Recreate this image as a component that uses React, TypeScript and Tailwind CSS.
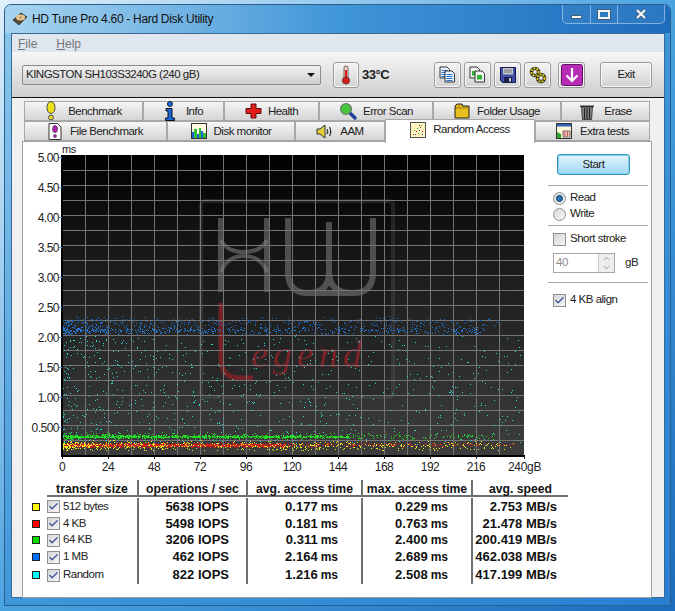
import type { ReactNode } from "react";
import { Check, ChevronDown, ChevronUp } from "lucide-react";

function makeRandom(seed: number) {
  let s = seed;
  return () => {
    s = (s + 0x6d2b79f5) | 0;
    let t = Math.imul(s ^ (s >>> 15), 1 | s);
    t = (t + Math.imul(t ^ (t >>> 7), 61 | t)) ^ t;
    return ((t ^ (t >>> 14)) >>> 0) / 4294967296;
  };
}

const rnd = makeRandom(42);
const PLOT_L = 62;
const PLOT_W = 460;

// x is squeezed to the left so points thin out towards 240 gB
function dots(count: number, power: number, top: number, bottom: number, maxX = 1) {
  let d = "";
  for (let i = 0; i < count; i++) {
    const x = Math.round(PLOT_L + Math.pow(rnd(), power) * PLOT_W * maxX);
    const y = Math.round(top + (rnd() + rnd()) * 0.5 * (bottom - top));
    d += `M${x} ${y}h1v1h-1z`;
  }
  return d;
}

function flatDots(count: number, power: number, top: number, bottom: number) {
  let d = "";
  for (let i = 0; i < count; i++) {
    const x = Math.round(PLOT_L + Math.pow(rnd(), power) * PLOT_W);
    const y = Math.round(top + rnd() * (bottom - top));
    d += `M${x} ${y}h1v1h-1z`;
  }
  return d;
}

const series = {
  random: flatDots(800, 1.5, 336, 446),
  blueHigh: dots(420, 1.45, 316, 328, 0.95),
  blueLow: dots(620, 1.5, 325, 335, 0.92),
  greenSolid: dots(900, 1.2, 435, 438, 0.62),
  green: dots(420, 1.45, 432, 440, 0.95),
  redSolid: dots(1500, 1, 443, 447, 0.48),
  red: dots(380, 1.5, 442, 447, 0.98),
  yellow: dots(640, 1.7, 440, 451, 0.98),
};

const yLabels = ["5.00", "4.50", "4.00", "3.50", "3.00", "2.50", "2.00", "1.50", "1.00", "0.500"];
const xLabels = ["0", "24", "48", "72", "96", "120", "144", "168", "192", "216"];

function Chart() {
  const hLines = Array.from({ length: 20 }, (_, i) => 155 + i * 15);
  const vLines = Array.from({ length: 20 }, (_, i) => 61 + i * 23);
  return (
    <svg viewBox="22 142 525 335" className="h-[335px] w-[525px] shrink-0" fontFamily="'Liberation Sans', sans-serif">
      <defs>
        <linearGradient id="plotBg" x1="0" y1="0" x2="0" y2="1">
          <stop offset="0" stopColor="#000000" />
          <stop offset="0.35" stopColor="#1a1a1a" />
          <stop offset="1" stopColor="#3d3d3d" />
        </linearGradient>
      </defs>
      <text x="61" y="153" fontSize="11" fill="#222">ms</text>
      <rect x="61" y="155" width="462" height="300" fill="url(#plotBg)" />

      {/* watermark logo */}
      <rect x="200" y="201" width="192" height="196" rx="4" fill="#000" fillOpacity="0.12" stroke="#777" strokeOpacity="0.22" strokeWidth="4" />
      <g fill="none" stroke="#8a8a8a" strokeOpacity="0.5" strokeWidth="6">
        <path d="M220 218V292M266 218V292" />
        <path d="M220 240Q226 252 243 252Q260 252 266 240M220 272Q226 256 243 256Q260 256 266 272" strokeWidth="4" />
        <path d="M287 218V272Q287 293 307 293H352Q372 293 372 272V218M328 222V272Q328 293 307 293M328 272Q328 293 352 293" />
      </g>
      <path d="M220 303V358Q220 378 238 378H252" fill="none" stroke="#8a2228" strokeOpacity="0.8" strokeWidth="5" />
      <text x="250" y="367" fontSize="38" fontStyle="italic" letterSpacing="5" fontFamily="'Liberation Serif', serif" fill="#8a2228" fillOpacity="0.85">egend</text>

      <g stroke="#747474" strokeWidth="1" shapeRendering="crispEdges">
        {hLines.slice(1).map((y) => (
          <line key={y} x1="61" x2="523" y1={y + 0.5} y2={y + 0.5} />
        ))}
        {vLines.slice(1).map((x) => (
          <line key={x} x1={x + 0.5} x2={x + 0.5} y1="155" y2="455" />
        ))}
      </g>

      <path d={series.random} fill="#35d8c8" />
      <path d={series.blueHigh} fill="#1b64b8" />
      <path d={series.blueLow} fill="#2478d8" />
      <path d={series.greenSolid} fill="#22e022" />
      <path d={series.green} fill="#22d822" />
      <path d={series.redSolid} fill="#c81c1c" />
      <path d={series.red} fill="#e01c1c" />
      <path d={series.yellow} fill="#eeee20" />

      <rect x="60" y="155" width="2" height="302" fill="#000" />
      <rect x="60" y="455" width="464" height="2" fill="#000" />
      {yLabels.map((l, i) => (
        <g key={l}>
          <text x="58" y={161.5 + i * 30} fontSize="12" textAnchor="end" fill="#222">{l}</text>
          <rect x="58" y={157 + i * 30} width="3" height="1" fill="#5a9bc8" />
        </g>
      ))}
      {xLabels.map((l, i) => (
        <g key={l}>
          <text x={61 + i * 46} y="470.5" fontSize="12" textAnchor="middle" fill="#222">{l}</text>
          <rect x={61 + i * 46} y="456" width="1" height="3" fill="#222" />
        </g>
      ))}
      <text x="507" y="470.5" fontSize="12" letterSpacing="-0.3" fill="#222">240gB</text>
      <rect x="523" y="456" width="1" height="3" fill="#222" />
    </svg>
  );
}

// --- tab and toolbar icons ---

function ExclamationIcon() {
  return (
    <svg width="12" height="20" viewBox="0 0 12 20">
      <ellipse cx="6" cy="6.5" rx="4" ry="6" fill="#eee21c" stroke="#444" strokeWidth="1" />
      <circle cx="6" cy="16.5" r="2.4" fill="#eee21c" stroke="#444" strokeWidth="1" />
    </svg>
  );
}

function InfoIcon() {
  return (
    <svg width="12" height="20" viewBox="0 0 12 20">
      <circle cx="6" cy="3" r="2.6" fill="#1b66d8" stroke="#111" strokeWidth="0.8" />
      <path d="M2 7.5H8V17H10.5V19.5H1.5V17H4V10H2Z" fill="#1b66d8" stroke="#111" strokeWidth="1" />
    </svg>
  );
}

function CrossIcon() {
  return (
    <svg width="17" height="16" viewBox="0 0 17 16">
      <path d="M6 1H11V5.5H16V10.5H11V15H6V10.5H1V5.5H6Z" fill="#e21b1b" stroke="#5c1010" strokeWidth="1" />
    </svg>
  );
}

function MagnifierIcon() {
  return (
    <svg width="18" height="18" viewBox="0 0 18 18">
      <path d="M10 10L16 16" stroke="#1e3d9c" strokeWidth="3.4" strokeLinecap="round" />
      <circle cx="7" cy="7" r="5.4" fill="#43c83a" stroke="#6d7d6a" strokeWidth="1.4" />
    </svg>
  );
}

function FolderIcon() {
  return (
    <svg width="16" height="16" viewBox="0 0 16 16">
      <path d="M1 3L3 1H8L9 3H15V15H1Z" fill="#d8b020" stroke="#222" strokeWidth="1" />
      <rect x="1.5" y="5" width="13" height="9.5" fill="#e6bf1e" stroke="#6a5410" strokeWidth="0.6" />
    </svg>
  );
}

function TrashIcon() {
  return (
    <svg width="16" height="17" viewBox="0 0 16 17">
      <path d="M1 2.5H15V4H1Z" fill="#333" />
      <path d="M2.5 4H13.5L12.5 16.5H3.5Z" fill="#8a8a8a" stroke="#222" strokeWidth="0.8" />
      <path d="M5.5 5V16M8 5V16M10.5 5V16" stroke="#222" strokeWidth="1.2" />
    </svg>
  );
}

function FileExclamationIcon() {
  return (
    <svg width="14" height="17" viewBox="0 0 14 17">
      <path d="M1 .5H9.5L13 4V16.5H1Z" fill="#fff" stroke="#333" strokeWidth="1" />
      <ellipse cx="7" cy="6" rx="2.5" ry="3.6" fill="#b422b4" stroke="#333" strokeWidth="0.6" />
      <circle cx="7" cy="13" r="1.5" fill="#b422b4" stroke="#333" strokeWidth="0.6" />
    </svg>
  );
}

function MonitorIcon() {
  return (
    <svg width="16" height="16" viewBox="0 0 16 16">
      <rect x=".5" y=".5" width="15" height="15" fill="#fffbe0" stroke="#333" />
      <path d="M1 15V9H3V15ZM6 15V11H8V15ZM10 15V8H12V15Z" fill="#1c5fd8" />
      <path d="M3 15V6H6V15ZM8 15V5H10V15ZM12 15V10H15V15Z" fill="#2fc02f" />
    </svg>
  );
}

function SpeakerIcon() {
  return (
    <svg width="17" height="15" viewBox="0 0 17 15">
      <path d="M1 5H4L9 1V14L4 10H1Z" fill="#e2cf3a" stroke="#333" strokeWidth="1" />
      <path d="M11 5Q12.5 7.5 11 10M13.5 3Q16 7.5 13.5 12" fill="none" stroke="#333" strokeWidth="1.2" />
    </svg>
  );
}

function RandomIcon() {
  return (
    <svg width="16" height="16" viewBox="0 0 16 16">
      <rect x=".5" y=".5" width="15" height="15" fill="#fff4c0" stroke="#555" />
      <path d="M3 12h1v1H3zM6 9h1v1H6zM10 5h1v1h-1zM12 9h1v1h-1z" fill="#d02020" />
      <path d="M4 8h1v1H4zM8 11h1v1H8zM11 3h1v1h-1zM7 6h1v1H7z" fill="#2a9a2a" />
      <path d="M5 12h1v1H5zM9 8h1v1H9zM12 12h1v1h-1zM9 3h1v1H9z" fill="#2a50c0" />
    </svg>
  );
}

function ExtraIcon() {
  return (
    <svg width="16" height="16" viewBox="0 0 16 16">
      <rect x=".5" y=".5" width="15" height="15" fill="#fbf7d8" stroke="#333" />
      <rect x="1" y="1" width="14" height="2.5" fill="#2f62b8" />
      <path d="M1 15V9L5 11V15Z" fill="#2fa52f" />
      <path d="M7 8h7v6H7z" fill="#fff" stroke="#444" strokeWidth="0.8" />
      <path d="M9 8v6M11.5 8v6M7 10h7M7 12h7" stroke="#c02020" strokeWidth="0.6" />
    </svg>
  );
}

function HddIcon() {
  return (
    <svg width="16" height="14" viewBox="0 0 16 14">
      <path d="M1 8L9 1L15 5L7 13Z" fill="#5a4a38" stroke="#222" strokeWidth="0.7" />
      <ellipse cx="8.6" cy="5.4" rx="4.6" ry="3" fill="#e6c28e" />
      <circle cx="8.6" cy="5.4" r="1" fill="#a8825a" />
    </svg>
  );
}

function ThermometerIcon() {
  return (
    <svg width="10" height="20" viewBox="0 0 10 20">
      <rect x="3" y="1" width="4" height="13" rx="2" fill="#f4d8d0" stroke="#5a3030" strokeWidth="0.8" />
      <rect x="4" y="5" width="2" height="9" fill="#d81c1c" />
      <circle cx="5" cy="15.5" r="3.6" fill="#d81c1c" stroke="#5a3030" strokeWidth="0.8" />
    </svg>
  );
}

function CopyIcon({ colored }: { colored?: boolean }) {
  const page = (x: number, y: number) => (
    <g>
      <path d={`M${x} ${y}h7l2.5 2.5V${y + 11}H${x}Z`} fill={colored ? "#f2f2f2" : "#eaf3ff"} stroke="#222" strokeWidth="0.9" />
      {colored ? (
        <rect x={x + 2} y={y + 4} width="5" height="4.5" fill="#32b232" />
      ) : (
        <path d={`M${x + 1.5} ${y + 3.5}h6M${x + 1.5} ${y + 5.5}h6M${x + 1.5} ${y + 7.5}h6M${x + 1.5} ${y + 9.5}h6`} stroke="#2a70c8" strokeWidth="1" />
      )}
    </g>
  );
  return (
    <svg width="17" height="17" viewBox="0 0 17 17">
      {page(1, 1)}
      {page(6, 5)}
    </svg>
  );
}

function FloppyIcon() {
  return (
    <svg width="16" height="16" viewBox="0 0 16 16">
      <path d="M.5.5H15.5V15.5H2.5L.5 13.5Z" fill="#3f4fa8" stroke="#14184a" />
      <rect x="3" y="1" width="10" height="6.5" fill="#c8c8cc" />
      <path d="M4 3h8M4 5h8" stroke="#777" strokeWidth="1" />
      <rect x="4" y="10" width="8" height="5.5" fill="#1c2050" />
      <rect x="9" y="11" width="2" height="3.5" fill="#c8c8cc" />
    </svg>
  );
}

function GearsIcon() {
  return (
    <svg width="18" height="18" viewBox="0 0 18 18">
      <circle cx="6" cy="6" r="3.6" fill="none" stroke="#222" strokeWidth="3.4" />
      <circle cx="6" cy="6" r="3.6" fill="none" stroke="#d8c81c" strokeWidth="2.2" strokeDasharray="2 1" />
      <circle cx="12" cy="12" r="3.6" fill="none" stroke="#222" strokeWidth="3.4" />
      <circle cx="12" cy="12" r="3.6" fill="none" stroke="#d8c81c" strokeWidth="2.2" strokeDasharray="2 1" />
    </svg>
  );
}

function DownloadIcon() {
  return (
    <svg width="22" height="22" viewBox="0 0 22 22">
      <rect x=".5" y=".5" width="21" height="21" rx="2" fill="#b82ab8" stroke="#5e1460" />
      <path d="M11 4V17M5.5 11.5L11 17L16.5 11.5" fill="none" stroke="#fff" strokeWidth="2.2" />
    </svg>
  );
}

// --- small controls ---

function ToolButton({ children, className }: { children: ReactNode; className: string }) {
  return (
    <div className={`flex h-[26px] items-center justify-center rounded-[3px] border border-[#9a9a9a] bg-gradient-to-b from-[#f4f4f4] to-[#d2d2d2] shadow-[inset_0_0_0_1px_#f8f8f8] ${className}`}>
      {children}
    </div>
  );
}

function Tab({ icon, label, width, gap }: { icon: ReactNode; label: string; width: string; gap: string }) {
  return (
    <div className={`flex h-full shrink-0 items-center justify-center border border-[#a8a8a8] bg-gradient-to-b from-[#f6f6f6] to-[#d4d4d4] text-[#222] ${gap} ${width}`}>
      {icon}
      <span className="pt-[2px]">{label}</span>
    </div>
  );
}

function WinCheck({ checked }: { checked?: boolean }) {
  return (
    <span className="flex h-[13px] w-[13px] shrink-0 items-center justify-center border border-[#8e8f8f] bg-gradient-to-br from-[#d6d6d8] to-[#f4f4f6]">
      {checked && <Check size={11} strokeWidth={2.6} className="text-[#3a4f94]" />}
    </span>
  );
}

function Radio({ selected }: { selected?: boolean }) {
  return (
    <span className="flex h-[13px] w-[13px] shrink-0 items-center justify-center rounded-full border border-[#8e8f8f] bg-gradient-to-br from-[#d8d8d8] to-[#f6f6f6]">
      {selected && <span className="h-[7px] w-[7px] rounded-full border border-[#123a62] bg-[#2a75b8]" />}
    </span>
  );
}

const rows = [
  { swatch: "bg-[#ffff00]", label: "512 bytes", iops: "5638", avg: "0.177", max: "0.229", speed: "2.753", h: "h-[17px]" },
  { swatch: "bg-[#ff0000]", label: "4 KB", iops: "5498", avg: "0.181", max: "0.763", speed: "21.478", h: "h-[17px]" },
  { swatch: "bg-[#00e000]", label: "64 KB", iops: "3206", avg: "0.311", max: "2.400", speed: "200.419", h: "h-[16px]" },
  { swatch: "bg-[#0070ff]", label: "1 MB", iops: "462", avg: "2.164", max: "2.689", speed: "462.038", h: "h-[18px]" },
  { swatch: "bg-[#00ffff]", label: "Random", iops: "822", avg: "1.216", max: "2.508", speed: "417.199", h: "h-[18px]" },
];

const colBorder = "border-r-2 border-[#6f6f6f]";

function ResultTable() {
  return (
    <div className="ml-[9px] text-[13px] font-bold tracking-normal text-[#111]">
      <div className="ml-[15px] mb-px flex h-[17px] w-[521px] items-center border-b-2 border-[#6f6f6f] text-[12.2px]">
        <div className={`h-full w-[92px] text-center ${colBorder}`}>transfer size</div>
        <div className={`h-full w-[109px] text-center ${colBorder}`}>operations / sec</div>
        <div className={`h-full w-[115px] text-center ${colBorder}`}>avg. access time</div>
        <div className={`h-full w-[110px] text-center ${colBorder}`}>max. access time</div>
        <div className="h-full flex-1 text-center">avg. speed</div>
      </div>
      {rows.map((r) => (
        <div key={r.label} className={`flex items-center ${r.h}`}>
          <span className={`mr-[7px] h-[8px] w-[8px] shrink-0 border border-[#222] ${r.swatch}`} />
          <div className={`flex h-full w-[92px] items-center gap-[3px] text-[11.5px] font-normal tracking-[-0.5px] text-[#222] ${colBorder}`}>
            <WinCheck checked />
            {r.label}
          </div>
          <div className={`flex h-full w-[109px] items-center justify-end pr-[17px] ${colBorder}`}>{r.iops} IOPS</div>
          <div className={`flex h-full w-[115px] items-center justify-end gap-[3px] pr-[23px] ${colBorder}`}>
            {r.avg} <span className="text-[12px]">ms</span>
          </div>
          <div className={`flex h-full w-[110px] items-center justify-end gap-[3px] pr-[23px] ${colBorder}`}>
            {r.max} <span className="text-[12px]">ms</span>
          </div>
          <div className="flex h-full w-[94px] items-center justify-end pr-[10px]">{r.speed} MB/s</div>
        </div>
      ))}
    </div>
  );
}

function SidePanel() {
  return (
    <div className="flex w-[100px] flex-col text-[#222]">
      <div className="ml-[9px] mt-[12px] flex h-[21px] w-[73px] items-center justify-center rounded-[3px] border border-[#3c8fb8] bg-gradient-to-b from-[#e4f5fd] to-[#9fd8f4] shadow-[inset_0_0_0_1px_#7fd4f2]">
        Start
      </div>
      <div className="mt-[10px] h-px bg-[#a8a8a8]" />
      <div className="ml-[5px] mt-[5px] flex h-[14px] items-center gap-[4px]"><Radio selected />Read</div>
      <div className="ml-[5px] mt-[2px] flex h-[14px] items-center gap-[4px]"><Radio />Write</div>
      <div className="mt-[4px] h-px bg-[#a8a8a8]" />
      <div className="ml-[5px] mt-[6px] flex h-[14px] items-center gap-[4px]"><WinCheck />Short stroke</div>
      <div className="ml-[5px] mt-[7px] flex items-center">
        <div className="flex h-[20px] w-[62px] items-center justify-between border border-[#a8a8a8] pl-[2px] text-[#8a8a8a]">
          40
          <div className="flex h-full w-[16px] flex-col border-l border-[#c8c8c8] bg-[#eeeeee] text-[#777]">
            <ChevronUp size={9} strokeWidth={2} className="mx-auto" />
            <ChevronDown size={9} strokeWidth={2} className="mx-auto" />
          </div>
        </div>
        <span className="ml-[10px]">gB</span>
      </div>
      <div className="mt-[9px] h-px bg-[#a8a8a8]" />
      <div className="ml-[5px] mt-[10px] flex h-[14px] items-center gap-[4px]"><WinCheck checked />4 KB align</div>
    </div>
  );
}

function WindowButtons() {
  return (
    <div className="mr-[5px] flex h-[19px] w-[103px] self-start rounded-b-[5px] border border-t-0 border-[#b7d8ee]/60 bg-[#3f8ac8]/40 text-white">
      <div className="flex w-[28px] items-end justify-center border-r border-[#b7d8ee]/60 pb-[4px]">
        <span className="h-[4px] w-[11px] border border-[#40607c] bg-[#f4f4f4]" />
      </div>
      <div className="flex w-[27px] items-center justify-center border-r border-[#b7d8ee]/60">
        <span className="h-[9px] w-[12px] border-2 border-[#f4f4f4] outline outline-1 outline-[#40607c]" />
      </div>
      <div className="flex flex-1 items-center justify-center">
        <svg width="12" height="10" viewBox="0 0 12 10">
          <path d="M2 1L10 9M10 1L2 9" stroke="#40607c" strokeWidth="3.6" />
          <path d="M2 1L10 9M10 1L2 9" stroke="#f4f4f4" strokeWidth="2.2" />
        </svg>
      </div>
    </div>
  );
}

export default function App() {
  return (
    <div className="h-[611px] w-[675px] overflow-hidden bg-gradient-to-br from-[#dff0fa] via-[#4aa3e0] to-[#1b6dbd] font-['Liberation_Sans',sans-serif] text-[11.5px] tracking-[-0.5px]">
      <div className="ml-[4px] h-[606px] w-[667px] pt-[4px]">
        <div className="h-[602px] w-full rounded-t-[7px] border border-[#2a5f90] bg-gradient-to-br from-[#8ac8ee] via-[#3f96d8] to-[#2a7fd2]">
          {/* title bar */}
          <div className="flex h-[28px] items-center justify-between rounded-t-[6px] bg-gradient-to-r from-[#a6d4ef] via-[#3f96d8] to-[#1e6cbc]">
            <div className="ml-[7px] flex items-center gap-[4px] text-[12px] tracking-[-0.3px] text-[#111]">
              <HddIcon />
              <span>HD Tune Pro 4.60 - Hard Disk Utility</span>
            </div>
            <WindowButtons />
          </div>

          <div className="ml-[6px] h-[565px] w-[654px] border border-[#3a6a94] bg-[#f0f0f0]">
            <div className="flex h-[18px] items-center gap-[19px] bg-[#dfe6ee] pl-[6px] pt-[2px] text-[12px] tracking-normal text-[#757575]">
              <span><u>F</u>ile</span>
              <span><u>H</u>elp</span>
            </div>

            {/* toolbar */}
            <div className="flex h-[46px] items-center border-b border-[#111] bg-gradient-to-b from-[#f6f6f6] to-[#cfcfcf] pl-[10px]">
              <div className="flex h-[20px] w-[299px] items-center justify-between rounded-[2px] border border-[#8a8a8a] bg-gradient-to-b from-[#f2f2f2] to-[#cfcfcf] px-[3px] text-[#222]">
                <span>KINGSTON SH103S3240G (240 gB)</span>
                <span className="mr-[2px] h-0 w-0 border-x-[4px] border-t-[4px] border-x-transparent border-t-[#111]" />
              </div>
              <ToolButton className="ml-[12px] w-[26px]"><ThermometerIcon /></ToolButton>
              <span className="ml-[3px] w-[72px] text-[13px] font-bold text-[#222]">33°C</span>
              <ToolButton className="w-[27px]"><CopyIcon /></ToolButton>
              <ToolButton className="ml-[3px] w-[27px]"><CopyIcon colored /></ToolButton>
              <ToolButton className="ml-[3px] w-[27px]"><FloppyIcon /></ToolButton>
              <ToolButton className="ml-[3px] w-[27px]"><GearsIcon /></ToolButton>
              <ToolButton className="ml-[7px] w-[27px]"><DownloadIcon /></ToolButton>
              <ToolButton className="ml-[15px] w-[52px] text-[#222]">Exit</ToolButton>
            </div>

            {/* tabs */}
            <div className="ml-[12px] w-[626px] pt-[3px]">
              <div className="flex h-[20px]">
                <Tab icon={<ExclamationIcon />} label="Benchmark" width="w-[119px]" gap="gap-[11px]" />
                <Tab icon={<InfoIcon />} label="Info" width="w-[81px]" gap="gap-[10px]" />
                <Tab icon={<CrossIcon />} label="Health" width="w-[95px]" gap="gap-[6px]" />
                <Tab icon={<MagnifierIcon />} label="Error Scan" width="w-[114px]" gap="gap-[6px]" />
                <Tab icon={<FolderIcon />} label="Folder Usage" width="w-[128px]" gap="gap-[7px]" />
                <Tab icon={<TrashIcon />} label="Erase" width="w-[89px]" gap="gap-[9px]" />
              </div>
              <div className="flex h-[20px]">
                <Tab icon={<FileExclamationIcon />} label="File Benchmark" width="w-[143px]" gap="gap-[8px]" />
                <Tab icon={<MonitorIcon />} label="Disk monitor" width="w-[128px]" gap="gap-[7px]" />
                <Tab icon={<SpeakerIcon />} label="AAM" width="w-[90px]" gap="gap-[7px]" />
                <div className="relative z-10 -mt-[2px] flex h-[24px] w-[150px] shrink-0 items-center justify-center gap-[7px] border border-b-0 border-[#a8a8a8] bg-white pb-[3px] text-[#222]">
                  <RandomIcon />
                  <span>Random Access</span>
                </div>
                <Tab icon={<ExtraIcon />} label="Extra tests" width="flex-1" gap="gap-[8px]" />
              </div>
            </div>

            {/* panel */}
            <div className="ml-[10px] h-[457px] w-[630px] border border-[#a0a0a0] bg-white">
              <div className="flex h-[335px]">
                <Chart />
                <SidePanel />
              </div>
              <div className="mt-[3px]">
                <ResultTable />
              </div>
            </div>
          </div>
        </div>
      </div>
    </div>
  );
}
